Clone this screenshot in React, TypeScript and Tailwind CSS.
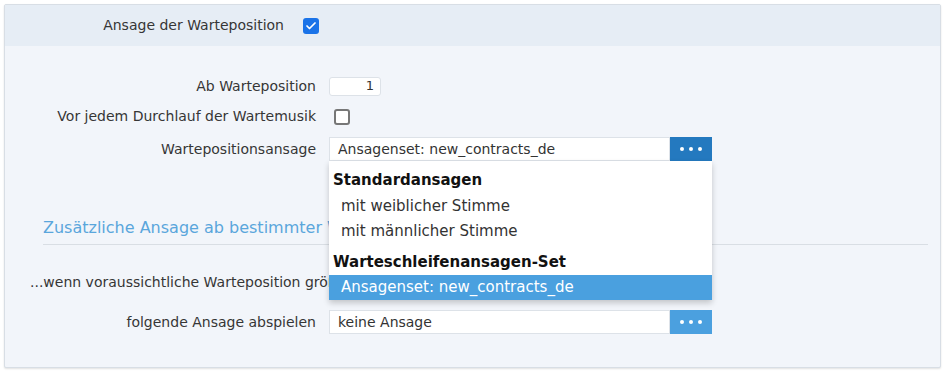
import { Check } from "lucide-react";

const font = "font-['DejaVu_Sans',_Verdana,_sans-serif]";

const Dots = () => (
  <span className="flex items-center gap-[5px]">
    <span className="h-[4px] w-[4px] rounded-full bg-white" />
    <span className="h-[4px] w-[4px] rounded-full bg-white" />
    <span className="h-[4px] w-[4px] rounded-full bg-white" />
  </span>
);

const SelectBox = ({
  value,
  button,
}: {
  value: string;
  button: string;
}) => (
  <div className="flex h-[24px] w-[383px] items-stretch">
    <div className="flex flex-1 items-center border border-[#dde2e8] bg-white pl-[8px] text-[14px] text-[#333]">
      {value}
    </div>
    <div className={`flex w-[42px] items-center justify-center ${button}`}>
      <Dots />
    </div>
  </div>
);

const Row = ({
  label,
  children,
  className = "",
}: {
  label: string;
  children: React.ReactNode;
  className?: string;
}) => (
  <div className={`flex items-center ${className}`}>
    <div className="w-[311px] shrink-0 whitespace-nowrap text-right text-[14px] text-[#363636]">
      {label}
    </div>
    <div className="ml-[13px] flex items-center">{children}</div>
  </div>
);

export default function App() {
  return (
    <div className={`h-[373px] w-[945px] bg-white p-[4px] ${font}`}>
      <div className="h-[364px] w-[937px] rounded-[2px] border border-[#d8dee5] bg-[#f2f5fa] shadow-[0_1px_2px_rgba(0,0,0,0.12)]">
        {/* header band */}
        <div className="flex h-[41px] items-center bg-[#e6edf5]">
          <div className="w-[279px] shrink-0 whitespace-nowrap text-right text-[14px] text-[#363636]">
            Ansage der Warteposition
          </div>
          <span className="ml-[19px] flex h-[16px] w-[16px] items-center justify-center rounded-[3px] bg-[#1a73e8]">
            <Check size={12} strokeWidth={3.5} className="text-white" />
          </span>
        </div>

        <div className="pt-[25px]">
          <Row label="Ab Warteposition" className="h-[30px]">
            <div className="flex h-[19px] w-[52px] items-center justify-end rounded-[3px] border border-[#dde2e8] bg-white pr-[6px] text-[13px] text-[#333]">
              1
            </div>
          </Row>
          <Row label="Vor jedem Durchlauf der Wartemusik" className="h-[31px]">
            <span className="ml-[5px] h-[16px] w-[16px] rounded-[3px] border-2 border-[#777] bg-white" />
          </Row>
          <Row label="Wartepositionsansage" className="mt-[5px] h-[24px]">
            <div className="relative">
              <SelectBox
                value="Ansagenset: new_contracts_de"
                button="bg-[#2479bf]"
              />
              {/* opened dropdown menu */}
              <div className="absolute left-0 top-full z-10 w-[383px] bg-white pt-[8px] shadow-[0_3px_6px_rgba(0,0,0,0.2)]">
                <div className="h-[22px] pl-[4px] text-[15px] font-bold leading-[22px] text-[#111]">
                  Standardansagen
                </div>
                <div className="mt-[3px] h-[25px] pl-[12px] text-[15px] leading-[25px] text-[#333]">
                  mit weiblicher Stimme
                </div>
                <div className="h-[25px] pl-[12px] text-[15px] leading-[25px] text-[#333]">
                  mit männlicher Stimme
                </div>
                <div className="mt-[7px] h-[22px] pl-[4px] text-[15px] font-bold leading-[22px] text-[#111]">
                  Warteschleifenansagen-Set
                </div>
                <div className="mt-[2px] h-[25px] bg-[#4aa0df] pl-[12px] text-[15px] leading-[25px] text-white">
                  Ansagenset: new_contracts_de
                </div>
              </div>
            </div>
          </Row>
        </div>

        {/* section heading */}
        <div className="mx-[38px] mt-[57px] w-[885px] border-b border-[#d9dee4] pb-[6px] text-[16px] leading-[20px] text-[#5aa6dc]">
          Zusätzliche Ansage ab bestimmter Warteposition
        </div>

        <div className="mt-[25px] flex h-[24px] items-center">
          <div className="shrink-0 whitespace-nowrap pl-[25px] text-[14px] text-[#363636]">
            ...wenn voraussichtliche Warteposition größer als
          </div>
        </div>
        <Row label="folgende Ansage abspielen" className="mt-[16px] h-[24px]">
          <SelectBox value="keine Ansage" button="bg-[#4ba0df]" />
        </Row>
      </div>
    </div>
  );
}
